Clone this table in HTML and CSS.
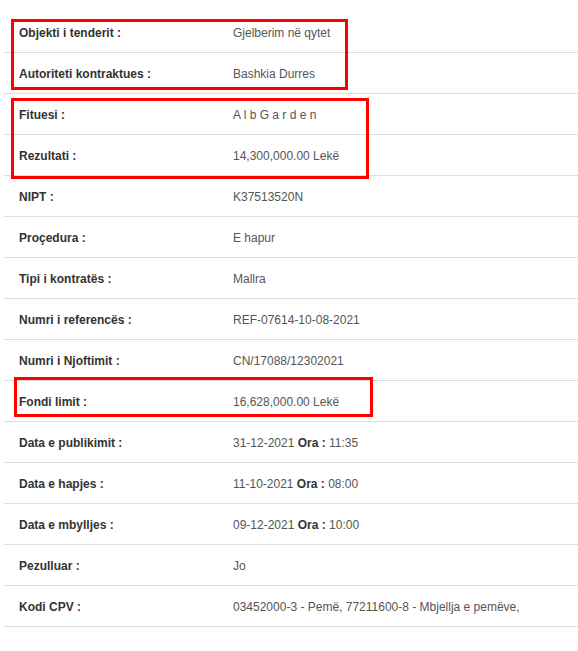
FILE: index.html
```html
<!DOCTYPE html>
<html>
<head>
<meta charset="utf-8">
<link rel="stylesheet" href="styles.css">
</head>
<body>
<div class="details">
  <div class="row"><div class="label">Objekti i tenderit :</div><div class="value">Gjelberim në qytet</div></div>
  <div class="row"><div class="label">Autoriteti kontraktues :</div><div class="value">Bashkia Durres</div></div>
  <div class="row"><div class="label">Fituesi :</div><div class="value">A l b G a r d e n</div></div>
  <div class="row"><div class="label">Rezultati :</div><div class="value">14,300,000.00 Lekë</div></div>
  <div class="row"><div class="label">NIPT :</div><div class="value">K37513520N</div></div>
  <div class="row"><div class="label">Proçedura :</div><div class="value">E hapur</div></div>
  <div class="row"><div class="label">Tipi i kontratës :</div><div class="value">Mallra</div></div>
  <div class="row"><div class="label">Numri i referencës :</div><div class="value">REF-07614-10-08-2021</div></div>
  <div class="row"><div class="label">Numri i Njoftimit :</div><div class="value">CN/17088/12302021</div></div>
  <div class="row"><div class="label">Fondi limit :</div><div class="value">16,628,000.00 Lekë</div></div>
  <div class="row"><div class="label">Data e publikimit :</div><div class="value">31-12-2021 <b>Ora :</b> 11:35</div></div>
  <div class="row"><div class="label">Data e hapjes :</div><div class="value">11-10-2021 <b>Ora :</b> 08:00</div></div>
  <div class="row"><div class="label">Data e mbylljes :</div><div class="value">09-12-2021 <b>Ora :</b> 10:00</div></div>
  <div class="row"><div class="label">Pezulluar :</div><div class="value">Jo</div></div>
  <div class="row"><div class="label">Kodi CPV :</div><div class="value">03452000-3 - Pemë, 77211600-8 - Mbjellja e pemëve,</div></div>
</div>
<div class="mark mark-1"></div>
<div class="mark mark-2"></div>
<div class="mark mark-3"></div>
</body>
</html>
```
FILE: styles.css
```css
html, body {
  margin: 0;
  padding: 0;
  background: #fff;
}
body {
  font-family: "Liberation Sans", Arial, sans-serif;
  font-size: 12px;
  color: #333;
  position: relative;
  width: 578px;
  height: 651px;
  overflow: hidden;
}
.details {
  margin: 12px 0 0 4px;
  width: 574px;
}
.row {
  display: flex;
  align-items: center;
  height: 38px;
  padding-top: 2px;
  border-bottom: 1px solid #dddddd;
}
.label {
  width: 214px;
  padding-left: 15px;
  font-weight: bold;
  color: #333;
}
.value {
  color: #555;
}
.value b {
  color: #333;
}
.mark {
  position: absolute;
  border: 3px solid #ff0000;
  box-sizing: border-box;
}
.mark-1 { left: 11px; top: 19px; width: 337px; height: 71px; }
.mark-2 { left: 11px; top: 98px; width: 358px; height: 81px; }
.mark-3 { left: 14px; top: 377px; width: 359px; height: 40px; }
```
